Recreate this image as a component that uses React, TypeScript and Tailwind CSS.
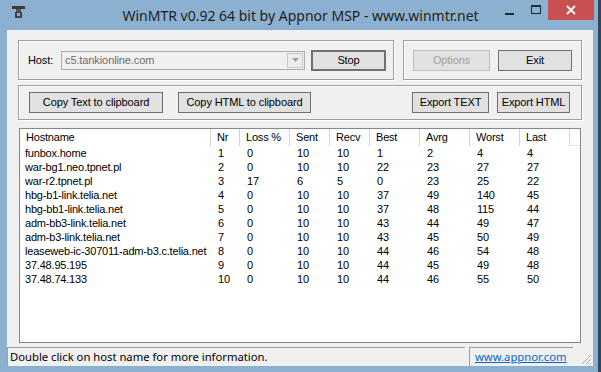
const rows = [
  ['funbox.home', '1', '0', '10', '10', '1', '2', '4', '4'],
  ['war-bg1.neo.tpnet.pl', '2', '0', '10', '10', '22', '23', '27', '27'],
  ['war-r2.tpnet.pl', '3', '17', '6', '5', '0', '23', '25', '22'],
  ['hbg-b1-link.telia.net', '4', '0', '10', '10', '37', '49', '140', '45'],
  ['hbg-bb1-link.telia.net', '5', '0', '10', '10', '37', '48', '115', '44'],
  ['adm-bb3-link.telia.net', '6', '0', '10', '10', '43', '44', '49', '47'],
  ['adm-b3-link.telia.net', '7', '0', '10', '10', '43', '45', '50', '49'],
  ['leaseweb-ic-307011-adm-b3.c.telia.net', '8', '0', '10', '10', '44', '46', '54', '48'],
  ['37.48.95.195', '9', '0', '10', '10', '44', '45', '49', '48'],
  ['37.48.74.133', '10', '0', '10', '10', '44', '46', '55', '50'],
]

const headers = ['Hostname', 'Nr', 'Loss %', 'Sent', 'Recv', 'Best', 'Avrg', 'Worst', 'Last']

const cols = 'grid grid-cols-[191px_29px_50px_40px_40px_50px_50px_50px_50px_1fr]'

function Btn({ label, w, disabled, primary }: { label: string; w: string; disabled?: boolean; primary?: boolean }) {
  return (
    <button
      type="button"
      className={`${w} h-[21px] flex items-center justify-center bg-[#e1e1e1] ${
        primary ? 'border-2 border-[#707070]' : disabled ? 'border border-[#bfbfbf] text-[#a0a0a0]' : 'border border-[#707070]'
      }`}
    >
      {label}
    </button>
  )
}

function Group({ className, children }: { className: string; children: React.ReactNode }) {
  return (
    <div className={`border border-[#a0a0a0] shadow-[inset_1px_1px_0_#ffffff,1px_1px_0_#ffffff] ${className}`}>
      {children}
    </div>
  )
}

export default function App() {
  return (
    <div className="w-[601px] h-[372px] bg-[#8cb1d0] flex flex-col overflow-hidden relative font-['Liberation_Sans',Arial,sans-serif] text-[11px] tracking-[-0.1px] text-black">
      {/* title bar */}
      <div className="h-[30px] relative flex items-center shrink-0">
        <svg className="absolute left-[11px] top-[5px]" width="15" height="15" viewBox="0 0 15 15">
          <rect x="1" y="1" width="13" height="3" fill="#3a3a3a" />
          <rect x="5" y="4" width="5" height="3" fill="#555" />
          <rect x="4" y="7" width="7" height="6" fill="#444" />
          <rect x="6" y="8" width="3" height="3" fill="#9ab" />
        </svg>
        <div className="w-full text-center font-['Noto_Sans',sans-serif] text-[14px] tracking-normal text-[#1e1e1e]">
          WinMTR v0.92 64 bit by Appnor MSP - www.winmtr.net
        </div>
        <div className="absolute left-[505px] top-[13px] w-[9px] h-[2px] bg-[#1e2a36]" />
        <div className="absolute left-[531px] top-[5px] w-[10px] h-[9px] border border-[#1e2a36] border-t-2" />
        <div className="absolute left-[548px] top-0 w-[46px] h-[20px] bg-[#c75050] flex items-center justify-center">
          <svg width="10" height="10" viewBox="0 0 10 10">
            <path d="M1 1 L9 9 M9 1 L1 9" stroke="#fff" strokeWidth="1.8" />
          </svg>
        </div>
      </div>
      <div className="absolute right-0 top-0 w-[3px] h-full bg-[#34465a]" />

      {/* client */}
      <div className="flex-1 ml-[7px] mr-[8px] mb-[6px] bg-[#f0f0f0] flex flex-col">
        <div className="flex mt-[10px] ml-[11px] gap-[9px]">
          <Group className="w-[376px] h-[40px] flex items-center pl-[9px] pr-[7px]">
            <span className="w-[33px]">Host:</span>
            <div className="w-[244px] h-[19px] border border-[#acacac] bg-[#f0f0f0] flex items-center text-[#6d6d6d] pl-[3px] relative">
              c5.tankionline.com
              <div className="absolute right-[1px] top-[1px] w-[16px] h-[15px] border border-[#c8c8c8] bg-[#ececec] flex items-center justify-center">
                <svg width="7" height="4" viewBox="0 0 7 4">
                  <path d="M0 0 H7 L3.5 4 Z" fill="#a0a0a0" />
                </svg>
              </div>
            </div>
            <div className="ml-auto">
              <Btn label="Stop" w="w-[75px]" primary />
            </div>
          </Group>
          <Group className="w-[179px] h-[40px] flex items-center pl-[9px] gap-[8px]">
            <Btn label="Options" w="w-[77px]" disabled />
            <Btn label="Exit" w="w-[74px]" />
          </Group>
        </div>

        <Group className="mt-[5px] ml-[11px] w-[564px] h-[35px] flex items-center pl-[10px] pr-[11px]">
          <Btn label="Copy Text to clipboard" w="w-[134px]" />
          <div className="ml-[15px]">
            <Btn label="Copy HTML to clipboard" w="w-[133px]" />
          </div>
          <div className="ml-auto flex gap-[8px]">
            <Btn label="Export TEXT" w="w-[77px]" />
            <Btn label="Export HTML" w="w-[73px]" />
          </div>
        </Group>

        <div className="mt-[8px] ml-[12px] w-[562px] h-[215px] bg-white border border-[#828790] overflow-hidden tracking-[-0.2px]">
          <div className={`${cols} h-[17px] border-b border-[#e5e5e5]`}>
            {headers.map((h) => (
              <div key={h} className="pl-[6px] flex items-center border-r border-[#d5d5d5] bg-white">
                {h}
              </div>
            ))}
            <div />
          </div>
          {rows.map((r) => (
            <div key={r[0]} className={`${cols} h-[14px] leading-[14px]`}>
              {r.map((c, i) => (
                <div key={i} className={i === 0 ? 'pl-[5px] whitespace-nowrap' : 'pl-[7px]'}>
                  {c}
                </div>
              ))}
              <div />
            </div>
          ))}
        </div>

        {/* status bar */}
        <div className="mt-auto h-[21px] flex items-stretch font-['Noto_Sans',sans-serif] text-[11.25px] tracking-normal pt-[2px]">
          <div className="w-[458px] border-t border-l border-[#a0a0a0] flex items-center pl-[2px]">
            Double click on host name for more information.
          </div>
          <div className="ml-[4px] w-[104px] border-t border-l border-[#a0a0a0] flex items-center pl-[5px] text-[#0066cc] underline">
            www.appnor.com
          </div>
          <div className="flex-1 relative">
            <svg className="absolute right-[1px] bottom-[1px]" width="12" height="12" viewBox="0 0 12 12">
              <path d="M11 2 L2 11 M11 6 L6 11 M11 10 L10 11" stroke="#b0b0b0" strokeWidth="1" />
            </svg>
          </div>
        </div>
      </div>
    </div>
  )
}
